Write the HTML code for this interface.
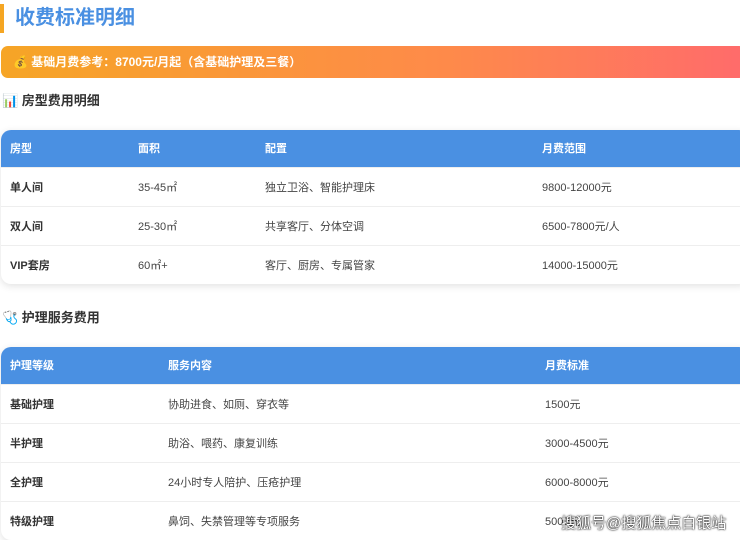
<!DOCTYPE html>
<html><head><meta charset="utf-8"><style>
*{margin:0;padding:0;box-sizing:border-box}
body{width:740px;height:540px;overflow:hidden;background:#fff;font-family:"Liberation Sans","Noto Sans CJK SC",sans-serif;color:#333;position:relative}
.title{position:absolute;left:0;top:4px;height:29px;border-left:4px solid #f5a623;padding-left:11px;font-size:20px;font-weight:bold;color:#4a90e2;line-height:29px}
.banner{position:absolute;left:1px;top:46px;width:745px;height:32px;border-radius:7px;background:linear-gradient(90deg,#f6a526,#fe8a4a 60%,#ff6b6b);color:#fff;font-size:12px;font-weight:bold;line-height:32px;padding-left:12px}
.h{position:absolute;left:2px;font-size:13px;font-weight:bold;color:#333}
table{position:absolute;left:1px;width:748px;border-collapse:collapse;border-radius:10px;overflow:hidden;box-shadow:0 2px 8px rgba(0,0,0,.12);font-size:11px}
th{background:#4a90e2;color:#fff;text-align:left;font-weight:bold;height:37px;padding-left:9px}
td{height:39px;padding-left:9px;border-top:1px solid #eee;color:#444}
td:first-child{font-weight:bold;color:#333}
.wm{position:absolute;left:561px;top:512px;font-size:15px;color:#fff;text-shadow:0 0 2px #000,0 0 1px #000;letter-spacing:0}
</style></head><body>
<div class="title">收费标准明细</div>
<div class="banner">💰 基础月费参考：8700元/月起（含基础护理及三餐）</div>
<div class="h" style="top:90px">📊 房型费用明细</div>
<table style="top:130px">
<tr><th style="width:128px">房型</th><th style="width:127px">面积</th><th style="width:277px">配置</th><th>月费范围</th></tr>
<tr><td>单人间</td><td>35-45㎡</td><td>独立卫浴、智能护理床</td><td>9800-12000元</td></tr>
<tr><td>双人间</td><td>25-30㎡</td><td>共享客厅、分体空调</td><td>6500-7800元/人</td></tr>
<tr><td>VIP套房</td><td>60㎡+</td><td>客厅、厨房、专属管家</td><td>14000-15000元</td></tr>
</table>
<div class="h" style="top:307px">🩺 护理服务费用</div>
<table style="top:347px">
<tr><th style="width:158px">护理等级</th><th style="width:377px">服务内容</th><th>月费标准</th></tr>
<tr><td>基础护理</td><td>协助进食、如厕、穿衣等</td><td>1500元</td></tr>
<tr><td>半护理</td><td>助浴、喂药、康复训练</td><td>3000-4500元</td></tr>
<tr><td>全护理</td><td>24小时专人陪护、压疮护理</td><td>6000-8000元</td></tr>
<tr><td>特级护理</td><td>鼻饲、失禁管理等专项服务</td><td>5000元</td></tr>
</table>
<div class="wm">搜狐号@搜狐焦点白银站</div>
</body></html>
